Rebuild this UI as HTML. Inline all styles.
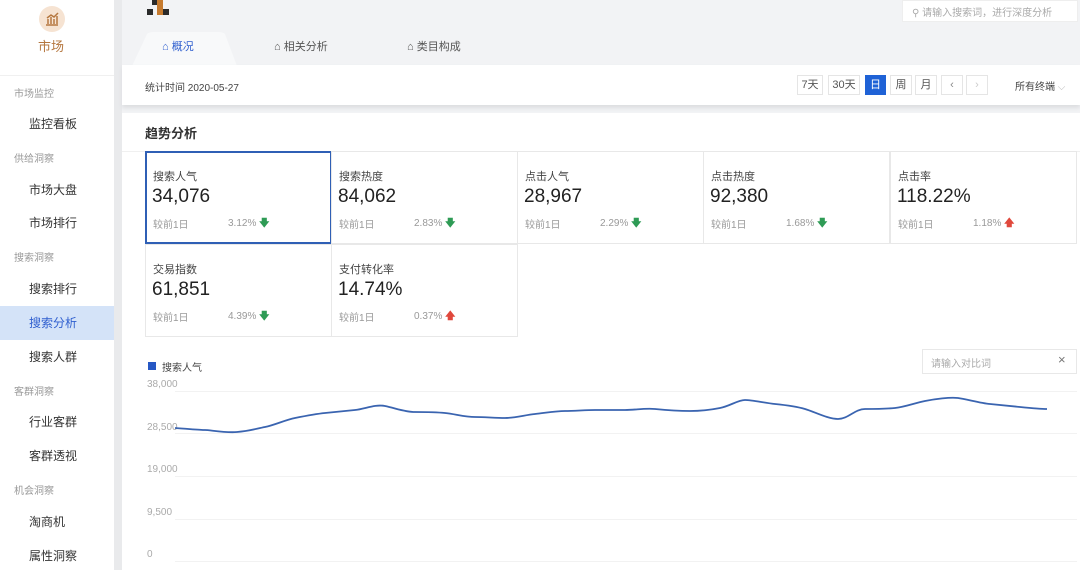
<!DOCTYPE html>
<html><head><meta charset="utf-8"><style>
*{margin:0;padding:0;box-sizing:border-box}
body{width:1080px;height:570px;overflow:hidden;background:#f2f3f5;font-family:"Liberation Sans","Noto Sans CJK SC",sans-serif;position:relative;color:#333}
.a{position:absolute;white-space:nowrap}
.sb{left:0;top:0;width:114px;height:570px;background:#fff}
.sec{font-size:10px;color:#999;left:14px}
.it{font-size:12px;color:#333;left:29px}
.btn{position:absolute;top:75px;height:20px;border:1px solid #e5e5e5;background:#fff;font-size:11px;color:#555;text-align:center;line-height:18px}
.card{position:absolute;width:187px;height:93px;border:1px solid #e8e8e8;background:#fff}
.card .t{position:absolute;left:7px;top:16px;font-size:11px;color:#444}
.card .v{position:absolute;left:6px;top:34px;font-size:19px;color:#222}
.card .c{position:absolute;left:7px;top:64px;font-size:10px;color:#999}
.card .p{position:absolute;left:82px;top:64px;font-size:10px;color:#999}
.dn{color:#2e9b55;font-weight:bold}
.up{color:#e0483c;font-weight:bold}
.yl{position:absolute;left:147px;font-size:10px;color:#aaa}
</style></head><body>
<div class="a sb"></div>
<div class="a" style="left:114px;top:0;width:8px;height:570px;background:#e9eaec"></div>
<div class="a" style="left:39px;top:6px;width:26px;height:26px;border-radius:50%;background:#f6e3d2"></div>
<svg class="a" style="left:43px;top:10px" width="18" height="18" viewBox="0 0 18 18"><path d="M3 15h12M5 14V9M8 14V7M11 14V9M14 14V6M4 8l4-3 3 2 4-4" stroke="#b5773f" stroke-width="1.5" fill="none"/></svg>
<div class="a" style="left:38px;top:36px;font-size:13px;color:#b5773f">市场</div>
<div class="a" style="left:0;top:75px;width:114px;height:1px;background:#f0f0f0"></div>
<div class="a sec" style="top:85px">市场监控</div>
<div class="a it" style="top:115px">监控看板</div>
<div class="a sec" style="top:150px">供给洞察</div>
<div class="a it" style="top:181px">市场大盘</div>
<div class="a it" style="top:214px">市场排行</div>
<div class="a sec" style="top:249px">搜索洞察</div>
<div class="a it" style="top:280px">搜索排行</div>
<div class="a" style="left:0;top:306px;width:114px;height:34px;background:#d4e3f8"></div>
<div class="a it" style="top:314px;color:#2f5fcf">搜索分析</div>
<div class="a it" style="top:348px">搜索人群</div>
<div class="a sec" style="top:383px">客群洞察</div>
<div class="a it" style="top:413px">行业客群</div>
<div class="a it" style="top:447px">客群透视</div>
<div class="a sec" style="top:482px">机会洞察</div>
<div class="a it" style="top:513px">淘商机</div>
<div class="a it" style="top:547px">属性洞察</div>

<div class="a" style="left:147px;top:9px;width:6px;height:6px;background:#2a2a2a"></div>
<div class="a" style="left:152px;top:0;width:5px;height:5px;background:#2a2a2a"></div>
<div class="a" style="left:157px;top:0;width:6px;height:15px;background:#c67a2e"></div>
<div class="a" style="left:163px;top:9px;width:6px;height:6px;background:#2a2a2a"></div>

<div class="a" style="left:902px;top:0;width:176px;height:22px;background:#fff;border:1px solid #eee"></div>
<div class="a" style="left:912px;top:4px;font-size:10px;color:#aaa">⚲ 请输入搜索词，进行深度分析</div>

<svg class="a" style="left:122px;top:30px" width="120" height="36"><path d="M10 36 L25 4 Q27 2 32 2 L96 2 Q101 2 103 4 L115 36Z" fill="#f8f9fa"/></svg>
<div class="a" style="left:162px;top:38px;font-size:11px;color:#2f5fcf">⌂ 概况</div>
<div class="a" style="left:274px;top:38px;font-size:11px;color:#555">⌂ 相关分析</div>
<div class="a" style="left:407px;top:38px;font-size:11px;color:#555">⌂ 类目构成</div>

<div class="a" style="left:122px;top:65px;width:958px;height:40px;background:#fff;box-shadow:0 3px 4px #dcdde0"></div>
<div class="a" style="left:145px;top:79px;font-size:10px;color:#444">统计时间 2020-05-27</div>
<div class="btn" style="left:797px;width:26px">7天</div>
<div class="btn" style="left:828px;width:32px">30天</div>
<div class="btn" style="left:865px;width:21px;background:#1f62d6;border-color:#1f62d6;color:#fff">日</div>
<div class="btn" style="left:890px;width:22px">周</div>
<div class="btn" style="left:915px;width:22px">月</div>
<div class="btn" style="left:941px;width:22px;color:#888">‹</div>
<div class="btn" style="left:966px;width:22px;color:#ccc">›</div>
<div class="a" style="left:1015px;top:78px;font-size:10px;color:#444">所有终端 <span style="color:#bbb">⌵</span></div>

<div class="a" style="left:122px;top:113px;width:958px;height:457px;background:#fff"></div>
<div class="a" style="left:145px;top:123px;font-size:13px;font-weight:bold;color:#333">趋势分析</div>
<div class="a" style="left:122px;top:151px;width:958px;height:1px;background:#f0f0f0"></div>

<div class="card" style="left:145px;top:151px;border:2px solid #2f5fb5"><div class="t" style="left:6px;top:15px">搜索人气</div><div class="v" style="left:5px;top:33px">34,076</div><div class="c" style="left:6px;top:63px">较前1日</div><div class="p" style="left:81px;top:63px">3.12% <span class="dn">🡇</span></div></div>
<div class="card" style="left:331px;top:151px"><div class="t">搜索热度</div><div class="v">84,062</div><div class="c">较前1日</div><div class="p">2.83% <span class="dn">🡇</span></div></div>
<div class="card" style="left:517px;top:151px"><div class="t">点击人气</div><div class="v">28,967</div><div class="c">较前1日</div><div class="p">2.29% <span class="dn">🡇</span></div></div>
<div class="card" style="left:703px;top:151px"><div class="t">点击热度</div><div class="v">92,380</div><div class="c">较前1日</div><div class="p">1.68% <span class="dn">🡇</span></div></div>
<div class="card" style="left:890px;top:151px"><div class="t">点击率</div><div class="v">118.22%</div><div class="c">较前1日</div><div class="p">1.18% <span class="up">🡅</span></div></div>
<div class="card" style="left:145px;top:244px"><div class="t">交易指数</div><div class="v">61,851</div><div class="c">较前1日</div><div class="p">4.39% <span class="dn">🡇</span></div></div>
<div class="card" style="left:331px;top:244px"><div class="t">支付转化率</div><div class="v">14.74%</div><div class="c">较前1日</div><div class="p">0.37% <span class="up">🡅</span></div></div>

<div class="a" style="left:148px;top:362px;width:8px;height:8px;background:#2658c4"></div>
<div class="a" style="left:162px;top:359px;font-size:10px;color:#444">搜索人气</div>
<div class="a" style="left:922px;top:349px;width:155px;height:25px;border:1px solid #e8e8e8;background:#fff"></div>
<div class="a" style="left:931px;top:355px;font-size:10px;color:#aaa">请输入对比词</div>
<div class="a" style="left:1058px;top:352px;font-size:13px;color:#777">×</div>

<div class="yl" style="top:379px">38,000</div>
<div class="yl" style="top:422px">28,500</div>
<div class="yl" style="top:464px">19,000</div>
<div class="yl" style="top:507px">9,500</div>
<div class="yl" style="top:549px">0</div>
<svg class="a" style="left:0;top:0" width="1080" height="570">
<g stroke="#f2f2f2" stroke-width="1"><line x1="175" y1="391.5" x2="1077" y2="391.5"/><line x1="175" y1="433.5" x2="1077" y2="433.5"/><line x1="175" y1="476.5" x2="1077" y2="476.5"/><line x1="175" y1="519.5" x2="1077" y2="519.5"/><line x1="175" y1="561.5" x2="1077" y2="561.5"/></g>
<path d="M175 428 C190 429,200 430,205 430 S225 433,237 432 S255 429,265 427 S285 420,295 418 S315 414,325 413 S345 411,355 410 S375 404,385 406 S405 412,415 412 S435 412,445 413 S465 417,475 417 S495 418,505 418 S525 415,535 414 S555 411,565 411 S585 410,595 410 S615 410,625 410 S645 408,655 409 S680 411,690 411 S710 410,720 408 S738 400,745 400 S765 403,775 404 S795 406,805 409 S828 419,838 419 S855 409,865 409 S885 409,895 408 S915 403,925 401 S950 397,958 398 S980 403,990 404 S1010 406,1020 407 S1040 409,1047 409" stroke="#3a64b0" stroke-width="1.8" fill="none"/>
</svg>
</body></html>
